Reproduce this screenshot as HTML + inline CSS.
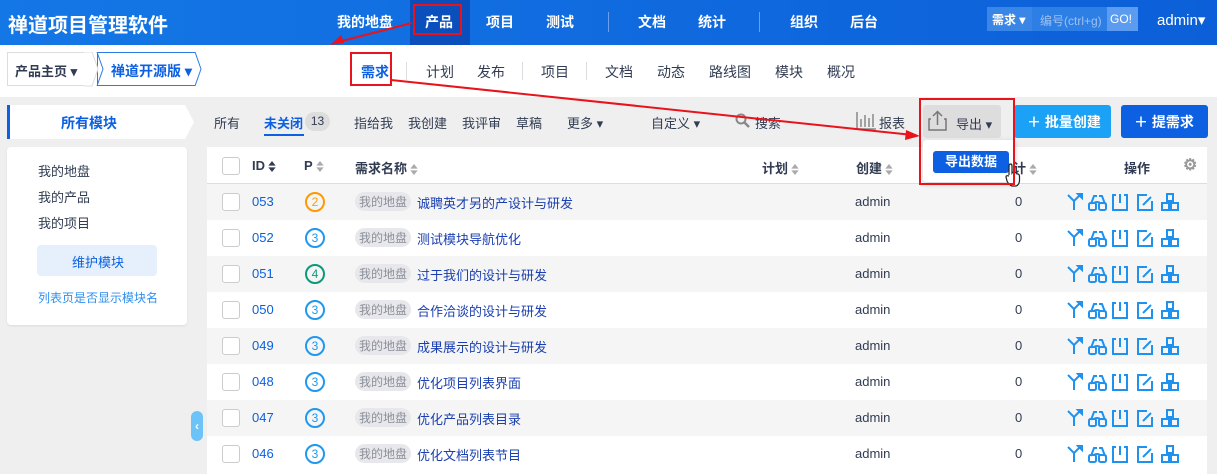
<!DOCTYPE html>
<html><head><meta charset="utf-8"><style>
*{margin:0;padding:0;box-sizing:border-box}
body{width:1217px;height:474px;overflow:hidden;background:#efefef;font-family:"Liberation Sans","Noto Sans CJK SC",sans-serif;font-size:13px;color:#313c52;position:relative}
.a{position:absolute;white-space:nowrap}
#hd{position:absolute;left:0;top:0;width:1217px;height:45px;background:linear-gradient(90deg,#1477e6,#0c5fd8)}
#hd .a{color:#fff;font-size:14px;top:12px;font-weight:bold}
#sub{position:absolute;left:0;top:45px;width:1217px;height:52px;background:#fff}
#sub .a{top:17px;font-size:14px;color:#313c52}
.sep{position:absolute;width:1px;background:#ddd}
.row{position:absolute;left:207px;width:1000px;height:36px}
.cb{position:absolute;left:15px;top:9px;width:18px;height:18px;border:1px solid #ccc;border-radius:3px;background:#fff}
.id{position:absolute;left:45px;top:10px;color:#0c60e1}
.pr{position:absolute;left:98px;top:8px;width:20px;height:20px;border:2px solid #2098ee;border-radius:50%;font-size:12px;text-align:center;line-height:16px;color:#2098ee}
.tag{position:absolute;left:148px;top:8px;background:#e8e8ec;color:#8a8f99;font-size:12px;padding:1px 4px;border-radius:10px}
.nm{position:absolute;left:210px;top:9px;color:#1a3fb0}
.ad{position:absolute;left:648px;top:10px}
.zr{position:absolute;left:808px;top:10px}
.ic{position:absolute;left:858px;top:7px}
.srt{display:inline-block;vertical-align:middle;margin-left:3px;width:8px;height:11px}
</style></head><body>
<div id="hd">
<div class="a" style="left:8px;top:9px;font-size:20px">禅道项目管理软件</div>
<div class="a" style="left:337px">我的地盘</div>
<div style="position:absolute;left:410px;top:0;width:60px;height:45px;background:#0b4fbd"></div>
<div class="a" style="left:425px">产品</div>
<div class="a" style="left:486px">项目</div>
<div class="a" style="left:546px">测试</div>
<div style="position:absolute;left:608px;top:12px;width:1px;height:20px;background:#6d9ff0"></div>
<div class="a" style="left:638px">文档</div>
<div class="a" style="left:698px">统计</div>
<div style="position:absolute;left:759px;top:12px;width:1px;height:20px;background:#6d9ff0"></div>
<div class="a" style="left:790px">组织</div>
<div class="a" style="left:850px">后台</div>
<div style="position:absolute;left:987px;top:7px;width:151px;height:24px;background:#2d7fe6"></div>
<div style="position:absolute;left:987px;top:7px;width:45px;height:24px;background:#3a86e6"></div>
<div class="a" style="left:992px;top:11px;font-size:12px">需求 ▾</div>
<div class="a" style="left:1040px;top:12px;font-size:12px;color:#9cc0f2;font-weight:normal">编号(ctrl+g)</div>
<div style="position:absolute;left:1107px;top:7px;width:31px;height:24px;background:#5b9cf0"></div>
<div class="a" style="left:1110px;top:12px;font-size:12px;font-weight:normal">GO!</div>
<div class="a" style="left:1157px;top:11px;font-size:15px;font-weight:normal">admin▾</div>
</div>
<div id="sub">
<div style="position:absolute;left:7px;top:7px;width:84px;height:34px;border:1px solid #ddd;border-right:none;background:#fff"></div>
<div class="a" style="left:15px;top:16px;font-weight:bold;font-size:13px">产品主页 ▾</div>
<div style="position:absolute;left:97px;top:7px;width:98px;height:34px;border:1px solid #2c7be5;border-right:none"></div>
<svg style="position:absolute;left:84px;top:7px" width="120" height="35"><path d="M0 0 L8 0 L14 17 L8 34 L0 34" fill="#fff" stroke="#ddd"/><path d="M111 0 L117 17 L111 34" fill="none" stroke="#2c7be5"/><path d="M13 0 L19 17 L13 34" fill="none" stroke="#2c7be5"/></svg>
<div class="a" style="left:111px;top:16px;color:#0c60e1;font-weight:bold">禅道开源版 ▾</div>
<div class="a" style="left:361px;color:#0c60e1;font-weight:bold">需求</div>
<div class="sep" style="left:406px;top:17px;height:18px"></div>
<div class="a" style="left:426px">计划</div>
<div class="a" style="left:477px">发布</div>
<div class="sep" style="left:522px;top:17px;height:18px"></div>
<div class="a" style="left:541px">项目</div>
<div class="sep" style="left:586px;top:17px;height:18px"></div>
<div class="a" style="left:605px">文档</div>
<div class="a" style="left:657px">动态</div>
<div class="a" style="left:709px">路线图</div>
<div class="a" style="left:775px">模块</div>
<div class="a" style="left:827px">概况</div>
</div>
<!-- sidebar -->
<svg style="position:absolute;left:7px;top:105px" width="190" height="35"><path d="M0 0 H178 L187 17 L178 34 H0Z" fill="#fff"/><rect width="3" height="34" fill="#0c60e1"/></svg>
<div class="a" style="left:61px;top:113px;color:#0c60e1;font-weight:bold;font-size:14px">所有模块</div>
<div style="position:absolute;left:7px;top:147px;width:180px;height:178px;background:#fff;border-radius:4px;box-shadow:0 1px 2px rgba(0,0,0,.08)"></div>
<div class="a" style="left:38px;top:161px">我的地盘</div>
<div class="a" style="left:38px;top:187px">我的产品</div>
<div class="a" style="left:38px;top:213px">我的项目</div>
<div style="position:absolute;left:37px;top:245px;width:120px;height:31px;background:#e6f0fc;border-radius:4px"></div>
<div class="a" style="left:72px;top:252px;color:#0c60e1">维护模块</div>
<div class="a" style="left:38px;top:289px;color:#2f8ff0;font-size:12px">列表页是否显示模块名</div>
<div style="position:absolute;left:191px;top:411px;width:12px;height:30px;background:#6cc3f7;border-radius:6px;color:#fff;font-size:12px;text-align:center;line-height:30px;font-weight:bold">‹</div>
<!-- toolbar -->
<div class="a" style="left:214px;top:113px">所有</div>
<div class="a" style="left:264px;top:113px;color:#0c60e1;font-weight:bold">未关闭</div>
<div style="position:absolute;left:264px;top:134px;width:40px;height:2px;background:#0c60e1"></div>
<div style="position:absolute;left:305px;top:112px;width:25px;height:19px;background:#ddd;border-radius:10px;font-size:12px;text-align:center;line-height:19px">13</div>
<div class="a" style="left:354px;top:113px">指给我</div>
<div class="a" style="left:408px;top:113px">我创建</div>
<div class="a" style="left:462px;top:113px">我评审</div>
<div class="a" style="left:516px;top:113px">草稿</div>
<div class="a" style="left:567px;top:113px">更多 ▾</div>
<div class="a" style="left:651px;top:113px">自定义 ▾</div>
<svg class="a" style="left:735px;top:113px" width="16" height="16"><circle cx="6" cy="6" r="4.5" fill="none" stroke="#888" stroke-width="2"/><path d="M9.5 9.5 L14 14" stroke="#888" stroke-width="2.5"/></svg>
<div class="a" style="left:755px;top:113px">搜索</div>
<svg class="a" style="left:856px;top:111px" width="20" height="19"><path d="M1 1 V18 H20 M5 8 V16 M9 4 V16 M13 7 V16 M17 3 V16" stroke="#888" stroke-width="1.5" fill="none"/></svg>
<div class="a" style="left:879px;top:113px">报表</div>
<div style="position:absolute;left:923px;top:105px;width:78px;height:33px;background:#ddd;border-radius:3px"></div>
<svg class="a" style="left:928px;top:110px" width="20" height="22"><path d="M3 9 H1 V20 H18 V9 H16" fill="none" stroke="#777" stroke-width="1.5"/><path d="M9.5 15 V2 M5 6 L9.5 1.5 L14 6" fill="none" stroke="#777" stroke-width="1.5"/></svg>
<div class="a" style="left:956px;top:114px">导出 ▾</div>
<div style="position:absolute;left:1014px;top:105px;width:97px;height:33px;background:#1ba1f5;border-radius:3px"></div>
<div class="a" style="left:1027px;top:112px;color:#fff;font-weight:bold;font-size:14px">＋ 批量创建</div>
<div style="position:absolute;left:1121px;top:105px;width:87px;height:33px;background:#0c60e1;border-radius:3px"></div>
<div class="a" style="left:1134px;top:112px;color:#fff;font-weight:bold;font-size:14px">＋ 提需求</div>
<!-- table -->
<svg width="0" height="0" style="position:absolute"><defs>
<g id="srt"><path d="M0 5 L4 0 L8 5Z M0 7 L4 12 L8 7Z" fill="#aaa"/></g>
<g id="ops" fill="none" stroke="#1f92f0" stroke-width="2">
<path d="M9 19 V10 L3 4 M9 10 L15 4"/><path d="M13 3 H17 V7Z" fill="#1f92f0"/>
<path d="M26 13 L29 5 H32 M40 13 L37 5 H34 M29 13 Q29 11 32 11 Q35 11 35 13"/>
<rect x="24" y="12" width="7" height="7" rx="1.5"/><rect x="34" y="12" width="7" height="7" rx="1.5"/>
<path d="M51 4 H48 V19 H62 V4 H59 M55 3 V12"/>
<path d="M82 4 H73 V19 H87 V10 M78 14 L86 6"/>
<path d="M102 3 h6 v7 h-6z M97 12 h7 v7 h-7z M106 12 h7 v7 h-7z"/>
</g></defs></svg>
<div style="position:absolute;left:207px;top:147px;width:1000px;height:327px;background:#fff"></div>
<div class="row" style="top:147px;height:37px;border-bottom:1px solid #ddd;font-weight:bold">
<div class="cb" style="top:10px"></div>
<div class="a" style="left:45px;top:11px">ID<svg class="srt" viewBox="0 0 8 12"><path d="M0 5 L4 0 L8 5Z" fill="#313c52"/><path d="M0 7 L4 12 L8 7Z" fill="#313c52"/></svg></div>
<div class="a" style="left:97px;top:11px">P<svg class="srt" viewBox="0 0 8 12"><use href="#srt"/></svg></div>
<div class="a" style="left:148px;top:11px">需求名称<svg class="srt" viewBox="0 0 8 12"><use href="#srt"/></svg></div>
<div class="a" style="left:555px;top:11px">计划<svg class="srt" viewBox="0 0 8 12"><use href="#srt"/></svg></div>
<div class="a" style="left:649px;top:11px">创建<svg class="srt" viewBox="0 0 8 12"><use href="#srt"/></svg></div>
<div class="a" style="left:793px;top:11px">预计<svg class="srt" viewBox="0 0 8 12"><use href="#srt"/></svg></div>
<div class="a" style="left:917px;top:11px">操作</div>
<div class="a" style="left:976px;top:8px;color:#999;font-size:16px">⚙</div>
</div>
<div class="row" style="top:184px;background:#f5f5f5"><div class="cb"></div><div class="id">053</div><div class="pr" style="border-color:#f90;color:#f90">2</div><div class="tag">我的地盘</div><div class="nm">诚聘英才另的产设计与研发</div><div class="ad">admin</div><div class="zr">0</div><svg class="ic" width="116" height="22"><use href="#ops"/></svg></div>
<div class="row" style="top:220px"><div class="cb"></div><div class="id">052</div><div class="pr">3</div><div class="tag">我的地盘</div><div class="nm">测试模块导航优化</div><div class="ad">admin</div><div class="zr">0</div><svg class="ic" width="116" height="22"><use href="#ops"/></svg></div>
<div class="row" style="top:256px;background:#f5f5f5"><div class="cb"></div><div class="id">051</div><div class="pr" style="border-color:#0a9a7a;color:#0a9a7a">4</div><div class="tag">我的地盘</div><div class="nm">过于我们的设计与研发</div><div class="ad">admin</div><div class="zr">0</div><svg class="ic" width="116" height="22"><use href="#ops"/></svg></div>
<div class="row" style="top:292px"><div class="cb"></div><div class="id">050</div><div class="pr">3</div><div class="tag">我的地盘</div><div class="nm">合作洽谈的设计与研发</div><div class="ad">admin</div><div class="zr">0</div><svg class="ic" width="116" height="22"><use href="#ops"/></svg></div>
<div class="row" style="top:328px;background:#f5f5f5"><div class="cb"></div><div class="id">049</div><div class="pr">3</div><div class="tag">我的地盘</div><div class="nm">成果展示的设计与研发</div><div class="ad">admin</div><div class="zr">0</div><svg class="ic" width="116" height="22"><use href="#ops"/></svg></div>
<div class="row" style="top:364px"><div class="cb"></div><div class="id">048</div><div class="pr">3</div><div class="tag">我的地盘</div><div class="nm">优化项目列表界面</div><div class="ad">admin</div><div class="zr">0</div><svg class="ic" width="116" height="22"><use href="#ops"/></svg></div>
<div class="row" style="top:400px;background:#f5f5f5"><div class="cb"></div><div class="id">047</div><div class="pr">3</div><div class="tag">我的地盘</div><div class="nm">优化产品列表目录</div><div class="ad">admin</div><div class="zr">0</div><svg class="ic" width="116" height="22"><use href="#ops"/></svg></div>
<div class="row" style="top:436px"><div class="cb"></div><div class="id">046</div><div class="pr">3</div><div class="tag">我的地盘</div><div class="nm">优化文档列表节目</div><div class="ad">admin</div><div class="zr">0</div><svg class="ic" width="116" height="22"><use href="#ops"/></svg></div>
<!-- dropdown -->
<div style="position:absolute;left:923px;top:140px;width:92px;height:42px;background:#fff;box-shadow:0 2px 6px rgba(0,0,0,.2);border-radius:3px"></div>
<div style="position:absolute;left:933px;top:151px;width:76px;height:22px;background:#0c60e1;border-radius:3px;color:#fff;font-weight:bold;font-size:13px;text-align:center;line-height:22px">导出数据</div>
<svg class="a" style="left:1005px;top:163px" width="16" height="24"><path d="M4 12 V3 Q4 1 5.5 1 Q7 1 7 3 V10 Q8 8.5 9.5 10 Q11 9 12 11 Q14 10.5 14.5 13 V18 Q14 22 11 23 H7 Q4 22 2 18 L1 14 Q1 12 4 13" fill="#fff" stroke="#222" stroke-width="1.2"/></svg>
<!-- annotations -->
<svg style="position:absolute;left:0;top:0" width="1217" height="474">
<g fill="none" stroke="#e8131b" stroke-width="2">
<rect x="414" y="5" width="47" height="29"/>
<rect x="351" y="53" width="40" height="32"/>
<rect x="920" y="99" width="94" height="85"/>
<path d="M412 23 L338 42"/>
<path d="M391 80 L913 135"/>
</g>
<path d="M330 45 L341 35 L344 43Z" fill="#e8131b"/>
<path d="M920 136 L906 130 L905 140Z" fill="#e8131b"/>
</svg>
</body></html>
